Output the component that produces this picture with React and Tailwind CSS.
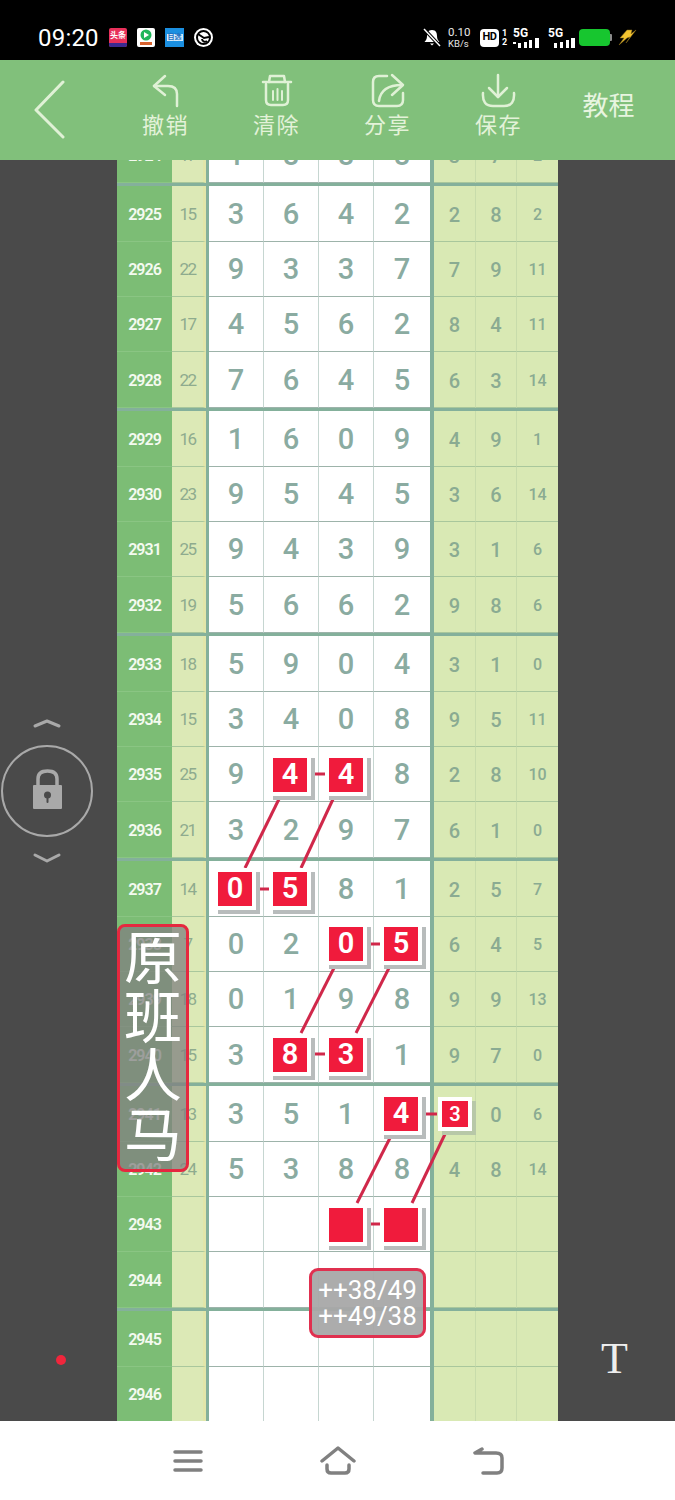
import React from 'react';

const ICON = '#e0f1d6';

// rows come in blocks of four, split by a thick line
const groups = [
  [['2924', '17', '1888', '3', '7', '2']],
  [
    ['2925', '15', '3642', '2', '8', '2'],
    ['2926', '22', '9337', '7', '9', '11'],
    ['2927', '17', '4562', '8', '4', '11'],
    ['2928', '22', '7645', '6', '3', '14'],
  ],
  [
    ['2929', '16', '1609', '4', '9', '1'],
    ['2930', '23', '9545', '3', '6', '14'],
    ['2931', '25', '9439', '3', '1', '6'],
    ['2932', '19', '5662', '9', '8', '6'],
  ],
  [
    ['2933', '18', '5904', '3', '1', '0'],
    ['2934', '15', '3408', '9', '5', '11'],
    ['2935', '25', '9448', '2', '8', '10'],
    ['2936', '21', '3297', '6', '1', '0'],
  ],
  [
    ['2937', '14', '0581', '2', '5', '7'],
    ['2938', '7', '0205', '6', '4', '5'],
    ['2939', '18', '0198', '9', '9', '13'],
    ['2940', '15', '3831', '9', '7', '0'],
  ],
  [
    ['2941', '13', '3514', '3', '0', '6'],
    ['2942', '24', '5388', '4', '8', '14'],
    ['2943', '', '', '', '', ''],
    ['2944', '', '', '', '', ''],
  ],
  [
    ['2945', '', '', '', '', ''],
    ['2946', '', '', '', '', ''],
  ],
];

const marks = [
  { text: '4', pos: 'left-[269px] top-[754px]' },
  { text: '4', pos: 'left-[325px] top-[754px]' },
  { text: '0', pos: 'left-[214px] top-[868px]' },
  { text: '5', pos: 'left-[269px] top-[868px]' },
  { text: '0', pos: 'left-[325px] top-[923px]' },
  { text: '5', pos: 'left-[380px] top-[923px]' },
  { text: '8', pos: 'left-[269px] top-[1034px]' },
  { text: '3', pos: 'left-[325px] top-[1034px]' },
  { text: '4', pos: 'left-[380px] top-[1093px]' },
  { text: '', pos: 'left-[325px] top-[1204px]' },
  { text: '', pos: 'left-[380px] top-[1204px]' },
];

const links = [
  [280, 797, 245, 868], [334, 797, 301, 868], [313, 774, 325, 774], [257, 889, 269, 889],
  [335, 966, 301, 1033], [390, 966, 356, 1033], [368, 944, 380, 944], [312, 1054, 325, 1054],
  [391, 1136, 357, 1203], [446, 1132, 412, 1203], [422, 1114, 437, 1114], [367, 1224, 380, 1224],
];

const Row = ({ row, height }) => {
  const [id, sum, digits, a, b, c] = row;
  return (
    <div className={`grid grid-cols-[55px_34px_3px_55px_55px_55px_56px_4px_42px_41px_41px] ${height}`}>
      <div className="flex items-center justify-center bg-[#7cbd75] border-b border-[#8ac583] pt-[2px] text-[16px] font-semibold tracking-[-1px] text-[#f4faf0]">{id}</div>
      <div className="flex items-center justify-center bg-[#dce9b6] border-b border-[#a9c79c] border-r-[3px] border-r-[#e2e6aa] pt-[2px] text-[17px] tracking-[-1.5px] text-[#8eab8e]">{sum}</div>
      <div className="bg-[#84b09b]" />
      {[0, 1, 2, 3].map((i) => (
        <div key={i} className={`flex items-center justify-center bg-white border-b border-[#9db3aa] pt-[2px] text-[29px] font-medium text-[#8aaba1] ${i < 3 ? 'border-r border-r-[#c6d6d1]' : ''}`}>
          {digits[i] || ''}
        </div>
      ))}
      <div className="bg-[#84b09b]" />
      <div className="flex items-center justify-center bg-[#d9e9b4] border-b border-r border-[#a9c79c] border-r-[#c8dcab] pt-[2px] text-[20px] font-medium text-[#8aab92]">{a}</div>
      <div className="flex items-center justify-center bg-[#d9e9b4] border-b border-r border-[#a9c79c] border-r-[#c8dcab] pt-[2px] text-[20px] font-medium text-[#8aab92]">{b}</div>
      <div className="flex items-center justify-center bg-[#d9e9b4] border-b border-[#a9c79c] pt-[2px] text-[16px] font-medium text-[#8aab92]">{c}</div>
    </div>
  );
};

const ToolItem = ({ label, children }) => (
  <div className="flex w-[111px] flex-col items-center pt-[13px]">
    <svg viewBox="0 0 40 36" className="h-[36px] w-[40px]" fill="none" stroke={ICON} strokeWidth="2.5" strokeLinecap="round" strokeLinejoin="round">
      {children}
    </svg>
    <span className="mt-[3px] text-[22px] leading-[28px] tracking-[1.5px] text-[#e3f2d9]">{label}</span>
  </div>
);

const StatusBar = () => (
  <div className="flex h-[60px] items-center bg-black pt-[15px] pl-[38px] text-white">
    <span className="w-[71px] text-[24px] leading-none tracking-[0.2px]">09:20</span>
    <div className="flex items-center gap-[10px]">
      <div className="flex h-[19px] w-[18px] flex-col overflow-hidden rounded-[2px] bg-[#e8305a] text-center text-[8px] font-bold leading-[15px] text-white">
        头条
        <div className="h-[4px] bg-[#3a2a90]" />
      </div>
      <svg viewBox="0 0 18 19" className="h-[19px] w-[18px]">
        <rect width="18" height="19" rx="2" fill="#fff" />
        <circle cx="9" cy="7" r="5.500" fill="#1fb65a" />
        <path d="M7 4 L12 7 L7 10Z" fill="#fff" />
        <rect x="3" y="14" width="12" height="3" fill="#d8632f" />
      </svg>
      <div className="flex h-[19px] w-[19px] items-center justify-center bg-[#1b8fe0] text-[7px] font-bold leading-none">
        <span className="bg-[#d4ebfb] px-[1px] text-[#1b6fc0]">自选</span>
      </div>
      <svg viewBox="0 0 19 19" className="h-[19px] w-[19px]">
        <circle cx="9.500" cy="9.500" r="9.500" fill="#fff" />
        <circle cx="9.500" cy="9.500" r="6.500" fill="#fff" stroke="#000" strokeWidth="2" />
        <path d="M4 6 L10 10 L15 9 M8 11 A3 3 0 0 0 13 13" stroke="#000" strokeWidth="2" fill="none" />
      </svg>
    </div>
    <div className="ml-auto flex items-center pr-[38px]">
      <svg viewBox="0 0 18 19" className="h-[19px] w-[18px]" fill="#fff">
        <path d="M9 2 C5 2 4 5 4 8 C4 11 3 12 1.500 14 H16.500 C15 12 14 11 14 8 C14 5 13 2 9 2Z" />
        <path d="M7 15.500 H11 L9 17.500Z" />
        <path d="M1 1 L17 18" stroke="#000" strokeWidth="3.500" />
        <path d="M1 1 L17 18" stroke="#fff" strokeWidth="1.500" />
      </svg>
      <div className="ml-[7px] flex w-[24px] flex-col leading-[11px] text-[#e8e8e8]">
        <span className="text-[11.5px]">0.10</span>
        <span className="text-[9.5px]">KB/s</span>
      </div>
      <div className="ml-[8px] flex h-[18px] w-[19px] items-center justify-center rounded-[4px] bg-white text-[11px] font-bold tracking-[-0.5px] text-black">HD</div>
      <div className="ml-[2px] flex w-[7px] flex-col text-center text-[9px] font-bold leading-[9px]">
        <span>1</span>
        <span>2</span>
      </div>
      <div className="ml-[5px] flex w-[30px] flex-col">
        <span className="text-[12px] font-bold leading-[10px]">5G</span>
        <svg viewBox="0 0 30 10" className="h-[10px] w-[30px]" fill="#fff">
          <rect x="0" y="4" width="3" height="2" />
          <rect x="5" y="5" width="3" height="5" />
          <rect x="11" y="4" width="3" height="6" />
          <rect x="16" y="2" width="3" height="8" />
          <rect x="22" y="0" width="4" height="10" />
        </svg>
      </div>
      <div className="ml-[5px] flex w-[30px] flex-col">
        <span className="text-[12px] font-bold leading-[10px]">5G</span>
        <svg viewBox="0 0 30 10" className="h-[10px] w-[30px]" fill="#fff">
          <rect x="6" y="5" width="3" height="5" />
          <rect x="12" y="4" width="3" height="6" />
          <rect x="18" y="2" width="3" height="8" />
          <rect x="23" y="0" width="4" height="10" />
        </svg>
      </div>
      <div className="ml-[1px] h-[17px] w-[31px] rounded-[4px] bg-[#17c62f]" />
      <div className="h-[7px] w-[2px] rounded-r-[1px] bg-[#8a8a8a]" />
      <svg viewBox="0 0 19 17" className="ml-[6px] h-[17px] w-[19px]" fill="none" strokeLinejoin="round">
        <path d="M9 1 L2 9 L6 9 L1 16 L9 9 L12 8 L8 14 L18 1 L13 5 L14 1Z" fill="#f4c430" stroke="#8a6d1a" strokeWidth="0.5" />
      </svg>
    </div>
  </div>
);

const Toolbar = () => (
  <div className="flex h-[100px] bg-[#81c07b]">
    <div className="flex w-[110px] items-center pl-[33px]">
      <svg viewBox="0 0 32 60" className="h-[60px] w-[32px]" fill="none" stroke={ICON} strokeWidth="3" strokeLinecap="round" strokeLinejoin="round">
        <path d="M30 2 L3 30 L30 57" />
      </svg>
    </div>
    <ToolItem label="撤销">
      <path d="M19 3 L8 13 L19 22" />
      <path d="M8 13 H22 Q31 13 31 21 V33" />
    </ToolItem>
    <ToolItem label="清除">
      <path d="M6 9 H34" />
      <path d="M12 9 L13 3 H27 L28 9" />
      <path d="M9 11 V27 Q9 32 14 32 H26 Q31 32 31 27 V11" />
      <path d="M16 18 V27 M20.500 16 V27 M25 18 V27" strokeWidth="2" />
    </ToolItem>
    <ToolItem label="分享">
      <path d="M19 3 H11 Q5 3 5 9 V27 Q5 33 11 33 H29 Q35 33 35 27 V20" />
      <path d="M24 2 L35 12 L24 22" />
      <path d="M11 28 Q13 12 34 12" />
    </ToolItem>
    <ToolItem label="保存">
      <path d="M19 2 V24" />
      <path d="M10 15 L19 24 L28 15" />
      <path d="M4 20 Q3 33 14 33 H25 Q36 33 35 20" />
    </ToolItem>
    <div className="flex flex-1 items-center justify-center pr-[12px] pb-[8px] text-[26px] text-[#e8f5e0]">教程</div>
  </div>
);

const SideControls = () => (
  <svg viewBox="0 0 94 150" className="absolute left-0 top-[716px] h-[150px] w-[94px]" fill="none" stroke="#a9a9a9" strokeLinecap="round" strokeLinejoin="round">
    <path d="M35 10 L47 5 L59 10" strokeWidth="3" />
    <circle cx="47" cy="75" r="45" strokeWidth="2" />
    <path d="M38 72 V63 Q38 55 47.500 55 Q57 55 57 63 V72" strokeWidth="3.500" />
    <rect x="33" y="69" width="29" height="24" rx="1" fill="#a9a9a9" stroke="none" />
    <circle cx="47.500" cy="79" r="3.500" fill="#4a4a4a" stroke="none" />
    <path d="M47.500 80 V86" stroke="#4a4a4a" strokeWidth="2" />
    <path d="M35 139 L47 145 L59 139" strokeWidth="3" />
  </svg>
);

const BottomNav = () => (
  <div className="flex h-[79px] items-center justify-center bg-white">
    <div className="flex w-[150px] justify-center">
      <svg viewBox="0 0 30 24" className="h-[24px] w-[30px]" fill="none" stroke="#808080" strokeWidth="3.500" strokeLinecap="round">
        <path d="M2 3 H28 M2 12 H28 M2 21 H28" />
      </svg>
    </div>
    <div className="flex w-[150px] justify-center">
      <svg viewBox="0 0 36 30" className="h-[30px] w-[36px]" fill="none" stroke="#808080" strokeWidth="3.500" strokeLinecap="round" strokeLinejoin="round">
        <path d="M2 15 L18 2 L34 15" />
        <path d="M7 19 V23 Q7 27 11 27 H25 Q29 27 29 23 V19" />
      </svg>
    </div>
    <div className="flex w-[150px] justify-center">
      <svg viewBox="0 0 32 28" className="h-[28px] w-[32px]" fill="none" stroke="#808080" strokeWidth="3.500" strokeLinecap="round" strokeLinejoin="round">
        <path d="M10 2 L3 6 H24 Q30 6 30 11 V21 Q30 26 25 26 H11" />
      </svg>
    </div>
  </div>
);

export default function App() {
  return (
    <div className="relative flex h-[1500px] w-[675px] flex-col overflow-hidden bg-[#4a4a4a] font-['Roboto','Noto_Sans_CJK_SC',sans-serif]">
      <StatusBar />
      <Toolbar />

      {/* sheet, scrolled so row 2924 is cut off */}
      <div className="flex h-[1261px] justify-center overflow-hidden">
        <div className="-mt-[33px] w-[441px]">
          {groups.map((group, g) => (
            <div key={g}>
              {group.map((row, i) => (
                <Row key={row[0]} row={row} height={i === 0 || i === 3 || g === 0 ? 'h-[56px]' : 'h-[55px]'} />
              ))}
              <div className="h-[3px] bg-[#84b09b]" />
            </div>
          ))}
        </div>
      </div>

      <BottomNav />

      <SideControls />
      <div className="absolute left-[56px] top-[1355px] size-[10px] rounded-full bg-[#f0263c]" />
      <div className="absolute left-[601px] top-[1331px] font-['Liberation_Serif',serif] text-[44px] leading-[56px] text-[#eeeeee]">T</div>

      {/* links between the marked numbers */}
      <svg viewBox="0 0 675 1500" className="pointer-events-none absolute inset-0 h-[1500px] w-[675px]" stroke="#d0284a" strokeWidth="3">
        {links.map(([x1, y1, x2, y2], i) => (
          <line key={i} x1={x1} y1={y1} x2={x2} y2={y2} />
        ))}
      </svg>

      {marks.map((m, i) => (
        <div key={i} className={`absolute flex size-[42px] items-center justify-center border-4 border-white bg-[#f01b3c] text-[29px] font-semibold text-white shadow-[4px_4px_0_#b8bcbc] ${m.pos}`}>
          {m.text}
        </div>
      ))}
      <div className="absolute left-[438px] top-[1097px] flex size-[34px] items-center justify-center border-4 border-white bg-[#f01b3c] text-[20px] font-semibold text-white shadow-[4px_4px_0_#b8c8a8]">3</div>

      <div className="absolute left-[117px] top-[924px] flex h-[248px] w-[72px] flex-col items-center justify-center rounded-lg border-[3px] border-[#e5283f] bg-[#808080]/75 text-[58px] leading-[59px] text-white">
        <span>原</span>
        <span>班</span>
        <span>人</span>
        <span>马</span>
      </div>

      <div className="absolute left-[309px] top-[1268px] flex h-[70px] w-[117px] flex-col items-center justify-center rounded-[9px] border-[3px] border-[#e0304f] bg-[#a8a8a8]/95 text-[26px] leading-[26px] text-white">
        <span>++38/49</span>
        <span>++49/38</span>
      </div>
    </div>
  );
}
